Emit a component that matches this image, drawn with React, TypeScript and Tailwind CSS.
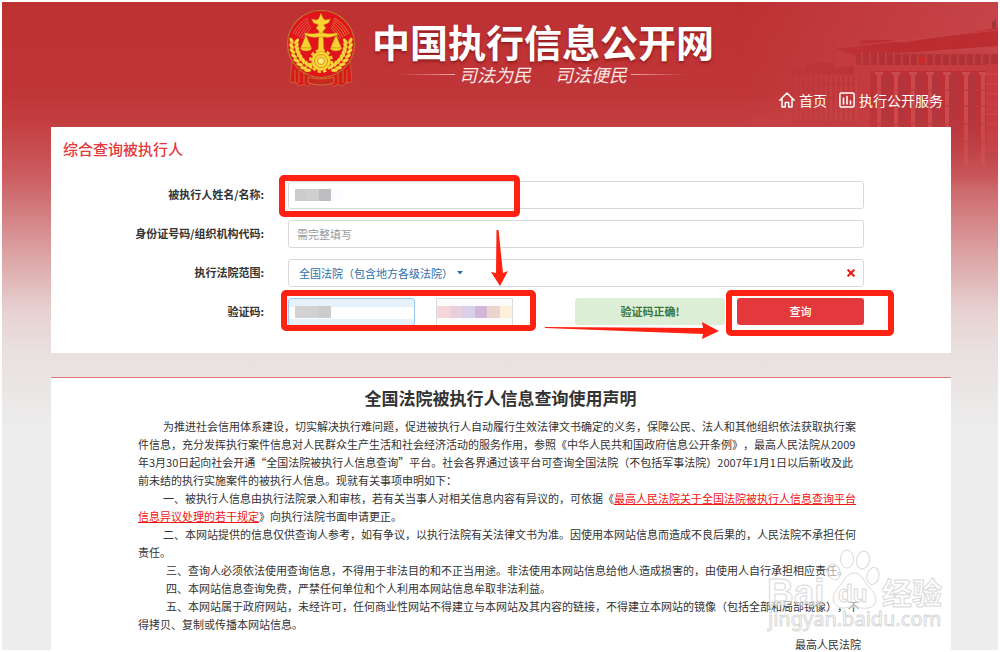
import React from "react";

const RED = "#ff2111";

function WheatBranch() {
  const angles = [186, 176, 166, 156, 146, 136, 126, 117];
  return (
    <g fill="#fbd93c" stroke="#cf8a1e" strokeWidth="0.35">
      {angles.map((deg) => {
        const a = (deg * Math.PI) / 180;
        const ox = 35 + 29.5 * Math.cos(a);
        const oy = 34 + 29.5 * Math.sin(a);
        const ix = 35 + 24.5 * Math.cos(a);
        const iy = 34 + 24.5 * Math.sin(a);
        return (
          <g key={deg}>
            <ellipse cx={ox} cy={oy} rx="1.7" ry="3.4" transform={`rotate(${deg - 208} ${ox} ${oy})`} />
            <ellipse cx={ix} cy={iy} rx="1.7" ry="3.4" transform={`rotate(${deg - 152} ${ix} ${iy})`} />
          </g>
        );
      })}
    </g>
  );
}

function Emblem() {
  const rays = [0, 1, 2, 3, 4, 5];
  const folds = [9, 13, 18, 27, 31, 35, 39, 43, 52, 57, 61];
  return (
    <svg viewBox="0 0 70 78" className="h-[78px] w-[70px] shrink-0" aria-hidden="true">
      <path d="M6 50 4 72l7 1 2 3 6-2 3 3 4-5h18l4 5 3-3 6 2 2-3 7-1-2-22Z" fill="#d91a1c" stroke="#c9703a" strokeWidth="0.7" />
      {folds.map((x) => (
        <path key={x} d={`M${x} 60v13`} stroke="#b9802f" strokeWidth="0.8" />
      ))}
      <path d="M22 67q13 4 26 0v6q-13 4-26 0Z" fill="#c9281f" stroke="#c98a3c" strokeWidth="0.7" />
      <circle cx="35" cy="34" r="33.5" fill="#e2141b" stroke="#b8762f" strokeWidth="1.2" />
      {rays.map((i) => (
        <g key={i} fill="none" strokeWidth="0.8">
          <path d={`M${7 + i * 2} ${24 + i}Q${12 + i * 2} ${13 + i * 1.6} ${22 + i * 0.6} ${8 + i * 1.9}`} stroke="#d9705a" />
          <path d={`M${63 - i * 2} ${24 + i}Q${58 - i * 2} ${13 + i * 1.6} ${48 - i * 0.6} ${8 + i * 1.9}`} stroke="#e09040" />
        </g>
      ))}
      <WheatBranch />
      <g transform="translate(70 0) scale(-1 1)">
        <WheatBranch />
      </g>
      <g fill="#f9d22f" stroke="#b9771a" strokeWidth="0.4">
        <path d="m35 3 2 5 2 2 5.500-1-2 4-5 2 2.500 3-3 3 1 22h-6l1-22-3-3 2.500-3-5-2-2-4 5.500 1 2-2Z" />
        <path d="M19 23q8 1.500 13 0h6q5 1.500 13 0l.5 2Q43 28.500 38 27h-6q-5 1.500-13.500-2Z" />
        <path d="m20 25-5.500 13h11Z" />
        <path d="m50 25-5.500 13h11Z" />
        <path d="M14 38h12q-1 3-6 3t-6-3ZM44 38h12q-1 3-6 3t-6-3Z" />
      </g>
      <circle cx="35" cy="51" r="10.500" fill="none" stroke="#f9d22f" strokeWidth="3" strokeDasharray="3.300 2.200" />
      <circle cx="35" cy="51" r="9.500" fill="#fbd735" stroke="#d99b22" strokeWidth="0.6" />
      <circle cx="35" cy="51" r="6.500" fill="none" stroke="#cf8a1e" strokeWidth="0.9" />
      <circle cx="35" cy="51" r="3.500" fill="#fde97a" stroke="#cf8a1e" strokeWidth="0.9" />
    </svg>
  );
}

function Courthouse() {
  const tall = [139, 156, 173, 190, 207, 226, 243];
  const low = Array.from({ length: 13 }, (_, i) => 58 + i * 5);
  return (
    <svg viewBox="0 0 260 186" className="absolute top-0 right-0 h-[186px] w-[260px]" aria-hidden="true">
      <defs>
        <linearGradient id="sky" x1="0" x2="1" y1="0" y2="0">
          <stop offset="0" stopColor="#d0606a" stopOpacity="0" />
          <stop offset="1" stopColor="#cf5a62" stopOpacity="0.45" />
        </linearGradient>
        <linearGradient id="fadeX" x1="0" x2="1" y1="0" y2="0">
          <stop offset="0.1" stopColor="#fff" stopOpacity="0" />
          <stop offset="0.6" stopColor="#fff" stopOpacity="0.85" />
        </linearGradient>
        <linearGradient id="fadeY" x1="0" x2="0" y1="0" y2="1">
          <stop offset="0.6" stopColor="#fff" />
          <stop offset="1" stopColor="#fff" stopOpacity="0" />
        </linearGradient>
        <mask id="maskX">
          <rect width="260" height="186" fill="url(#fadeX)" />
        </mask>
        <mask id="maskY">
          <rect width="260" height="186" fill="url(#fadeY)" />
        </mask>
      </defs>
      <g mask="url(#maskY)">
        <rect width="260" height="186" fill="url(#sky)" />
        <g mask="url(#maskX)">
          <path d="M118 62h142v124H118Z" fill="#b8282c" opacity="0.75" />
          <path d="M54 72h64v52H54Z" fill="#b8302f" opacity="0.6" />
          <path d="M258 2v25l-4-1V20l4-3Z" fill="#9c3338" />
          <path d="m96 46 26-4V38h32l8 3 98-15v18L118 54Z" fill="#ba2a2e" />
          <path d="m96 46 164-18" stroke="#c8464b" strokeWidth="1" />
          <path d="m44 68 24-2v-5h28v5l20-2v8H56Z" fill="#b92c30" />
          <path d="M118 52h142v12H118Z" fill="#a82a2f" opacity="0.8" />
          {Array.from({ length: 17 }, (_, i) => (
            <path key={i} d={`M${124 + i * 8} 50v14`} stroke="#bd3f43" strokeWidth="2" />
          ))}
          <path d="M116 63h144v6H116Z" fill="#c63c40" />
          <path d="M118 64h14v62h-14Z" fill="#c53a3e" />
          {low.map((x) => (
            <path key={x} d={`M${x} 73v46`} stroke="#c64a4e" strokeWidth="1.500" />
          ))}
          <path d="M56 82h60M56 96h60" stroke="#b03036" strokeWidth="1" />
          {tall.map((x) => (
            <g key={x}>
              <path d={`M${x + 6} 72v90h6V72Z`} fill="#9b3a48" opacity="0.45" />
              <path d={`M${x - 2} 70h8v3h-2v90h-4V73h-2Z`} fill="#cb4c50" />
            </g>
          ))}
          <path d="M138 88h112M138 104h112M138 122h112M138 140h112" stroke="#b8363b" strokeWidth="1" />
          <path d="M248 62h12v88h-12Z" fill="#c63a3e" />
          <path d="M248 72h12M248 82h12M248 92h12M248 102h12M248 112h12M248 122h12M248 132h12" stroke="#d05a5d" strokeWidth="0.5" />
          <circle cx="184" cy="58" r="3.500" fill="#cf2424" />
        </g>
      </g>
    </svg>
  );
}

function HomeIcon() {
  return (
    <svg viewBox="0 0 16 16" className="size-4" fill="none" stroke="currentColor" strokeWidth="1.500" strokeLinejoin="round" strokeLinecap="round" aria-hidden="true">
      <path d="M.8 8.200 8 1l7.200 7.200M3 7v8h3.300v-4.500h3.400V15H13V7" />
    </svg>
  );
}

function ChartIcon() {
  return (
    <svg viewBox="0 0 16 16" className="size-4" fill="none" stroke="currentColor" strokeWidth="1.500" strokeLinecap="round" aria-hidden="true">
      <rect x="0.900" y="0.900" width="14.200" height="14.200" rx="1.500" />
      <path d="M4.500 6v6M8 4.500V12M11.500 9v3" />
    </svg>
  );
}

function Mosaic({ colors }: { colors: string[] }) {
  return (
    <span className="pointer-events-none absolute top-2 left-[7px] flex" aria-hidden="true">
      {colors.map((c, i) => (
        <span key={i} className="h-3 w-3" style={{ backgroundColor: c }} />
      ))}
    </span>
  );
}

function Annotations() {
  return (
    <svg viewBox="0 0 900 226" className="pointer-events-none absolute top-0 left-0 h-[226px] w-[900px]" aria-hidden="true">
      <g fill="none" stroke={RED} strokeWidth="6">
        <rect x="231" y="51" width="235" height="36" rx="2" />
        <rect x="233" y="166" width="249" height="35" rx="2" />
        <rect x="678" y="166" width="162" height="40" rx="2" />
      </g>
      <path d="M445.500 103h2L452 146l5-2-8 15-9-14 5 1Z" fill={RED} />
      <path d="m494 200 158 1-1-6 17 9-17 8 1-5-158-6Z" fill={RED} />
    </svg>
  );
}

function Watermark() {
  return (
    <svg viewBox="0 0 180 88" className="pointer-events-none absolute right-[51px] bottom-[14px] h-[88px] w-[180px]" aria-hidden="true">
      <g fill="#fff" fillOpacity="0.55" stroke="#d9d9d9" strokeWidth="1" strokeLinejoin="round">
        <ellipse cx="80" cy="11" rx="6.500" ry="9" />
        <ellipse cx="96" cy="12" rx="6.500" ry="9" transform="rotate(12 96 12)" />
        <ellipse cx="67" cy="24" rx="6" ry="8" transform="rotate(-22 67 24)" />
        <ellipse cx="106" cy="28" rx="6" ry="8.500" transform="rotate(14 106 28)" />
        <path d="M87 25c-8 0-10 9-16 15s-8 18 4 20c5 0 8-1 12-1s8 2 14 1c11-2 9-14 2-20S96 25 87 25Z" />
        <text x="0" y="57" fontFamily="'Liberation Sans', Arial, sans-serif" fontWeight="700" fontSize="37">Bai</text>
        <text x="71" y="54" fontFamily="'Liberation Sans', Arial, sans-serif" fontWeight="700" fontSize="24">du</text>
        <text x="115" y="56" fontFamily="'Noto Sans CJK SC', sans-serif" fontWeight="700" fontSize="30">经验</text>
        <text x="1" y="78" fontFamily="'Noto Sans', sans-serif" fontWeight="400" fontSize="20">jingyan.baidu.com</text>
      </g>
    </svg>
  );
}

const label = "w-[213px] shrink-0 text-right text-[11px] font-bold leading-[26px] text-[#333]";
const field = "block h-7 w-full rounded-[3px] border border-[#d9d9d9] bg-white px-2 text-[11px] text-[#555] outline-none placeholder:text-[#999]";
const row = "flex items-start gap-6";

export default function App() {
  return (
    <div className="relative min-h-screen border-2 border-white bg-[#ededed] bg-[linear-gradient(180deg,#be3133_0px,#c03537_90px,#c44043_125px,#cb5e61_175px,#d68b8d_225px,#dfb1b2_270px,#e7d2d2_310px,#e9e0e0_350px,#ededed_430px)] bg-no-repeat font-['Noto_Sans_CJK_SC','Noto_Sans',sans-serif] text-[#333]">
      <Courthouse />
      <div className="relative flex flex-col pr-[47px] pl-[49px]">
        <header className="flex h-[125px] flex-col">
          <div className="flex justify-center gap-3 pt-2 pl-[2px]">
            <Emblem />
            <div className="flex flex-col items-center pt-[9px]">
              <h1 className="px-1 text-[38px] leading-[44px] font-bold text-white [text-shadow:0_2px_3px_rgba(100,0,0,0.5)]">中国执行信息公开网</h1>
              <p className="flex items-center gap-1 text-[18px] leading-[22px] text-[#fbe9e9] italic">
                <span className="h-px w-14 bg-linear-to-r from-transparent to-[#eba9aa]" />
                <span>司法为民</span>
                <span className="ml-5">司法便民</span>
                <span className="h-px w-14 bg-linear-to-l from-transparent to-[#eba9aa]" />
              </p>
            </div>
          </div>
          <nav className="mt-[2px] flex justify-end gap-3 pr-2 text-sm leading-5 text-white">
            <a href="#home" className="flex items-center gap-1">
              <HomeIcon />
              首页
            </a>
            <a href="#service" className="flex items-center gap-1">
              <ChartIcon />
              执行公开服务
            </a>
          </nav>
        </header>

        <main>
          <section className="relative bg-white pt-3 pb-[27px]">
            <h2 className="pl-3 text-[15px] leading-5 font-medium text-[#e4393c]">综合查询被执行人</h2>
            <form className="mt-[22px] flex flex-col gap-[11px] pr-[87px]" onSubmit={(e) => e.preventDefault()}>
              <div className={row}>
                <label htmlFor="name" className={label}>被执行人姓名/名称:</label>
                <div className="relative flex-1">
                  <input id="name" className={field} />
                  <Mosaic colors={["#cdcccd", "#cfcfd1", "#bdbdbf", "#fafcff"]} />
                </div>
              </div>
              <div className={row}>
                <label htmlFor="code" className={label}>身份证号码/组织机构代码:</label>
                <div className="flex-1">
                  <input id="code" className={field} placeholder="需完整填写" />
                </div>
              </div>
              <div className={row}>
                <span id="scope" className={label}>执行法院范围:</span>
                <div className="flex h-7 flex-1 items-center justify-between rounded-[3px] border border-[#d9d9d9] bg-white pr-2 pl-[10px]">
                  <button type="button" aria-labelledby="scope scope-value" className="flex items-center gap-1 text-[11px] text-[#2f6fae]">
                    <span id="scope-value">全国法院（包含地方各级法院）</span>
                    <svg viewBox="0 0 6 4" className="h-1 w-[6px]" aria-hidden="true">
                      <path d="M0 0h6L3 3.500Z" fill="#2f6fae" />
                    </svg>
                  </button>
                  <button type="button" aria-label="清除" className="text-[#f01414]">
                    <svg viewBox="0 0 8 8" className="size-2" fill="none" stroke="currentColor" strokeWidth="2" aria-hidden="true">
                      <path d="m.6.6 6.800 6.800M7.400.6.6 7.400" />
                    </svg>
                  </button>
                </div>
              </div>
              <div className={row}>
                <label htmlFor="captcha" className={label}>验证码:</label>
                <div className="flex flex-1 items-start">
                  <div className="relative w-[127px]">
                    <input id="captcha" className="block h-7 w-full rounded-[3px] border border-[#9ccbf0] bg-[linear-gradient(180deg,#e6f2fb_0_8px,#fff_8px_20px,#e6f2fb_20px)] px-2 text-[11px] outline-none" />
                    <Mosaic colors={["#d3d2d2", "#d1d1d1", "#cccccd"]} />
                  </div>
                  <div className="ml-[21px] flex h-7 w-[77px] items-center border border-[#dcdcdc] bg-[#fbfafa]" role="img" aria-label="验证码图片">
                    {["#f5d5d8", "#e8cfdc", "#d7d0e8", "#d3b5d8", "#ecd3cd", "#fdf0d8"].map((c) => (
                      <span key={c} className="h-3 flex-1" style={{ backgroundColor: c }} />
                    ))}
                  </div>
                  <p className="ml-[62px] h-[27px] flex-1 rounded-[3px] bg-[#dcefd6] text-center text-[11px] leading-[27px] font-bold text-[#3c763d]">验证码正确!</p>
                  <button type="submit" className="ml-3 h-[27px] w-[127px] rounded-[3px] bg-[#e4393c] text-[11px] font-medium text-white">查询</button>
                </div>
              </div>
            </form>
            <Annotations />
          </section>

          <section className="mt-6 border-t border-[#e2777a] bg-white pt-[7px] pr-[88px] pl-[87px] [text-spacing-trim:space-all]">
            <h2 className="text-center text-[17px] leading-[26px] font-bold">全国法院被执行人信息查询使用声明</h2>
            <div className="mt-[6px] text-[11px] leading-[18px] text-[#333]">
              <p className="indent-[25px]">为推进社会信用体系建设，切实解决执行难问题，促进被执行人自动履行生效法律文书确定的义务，保障公民、法人和其他组织依法获取执行案件信息，充分发挥执行案件信息对人民群众生产生活和社会经济活动的服务作用，参照《中华人民共和国政府信息公开条例》，最高人民法院从2009年3月30日起向社会开通“全国法院被执行人信息查询”平台。社会各界通过该平台可查询全国法院（不包括军事法院）2007年1月1日以后新收及此前未结的执行实施案件的被执行人信息。现就有关事项申明如下：</p>
              <p className="indent-[25px]">一、被执行人信息由执行法院录入和审核，若有关当事人对相关信息内容有异议的，可依据《<a href="#rules" className="text-[#f01414] underline">最高人民法院关于全国法院被执行人信息查询平台信息异议处理的若干规定</a>》向执行法院书面申请更正。</p>
              <p className="indent-[25px]">二、本网站提供的信息仅供查询人参考，如有争议，以执行法院有关法律文书为准。因使用本网站信息而造成不良后果的，人民法院不承担任何责任。</p>
              <p className="indent-[28px]">三、查询人必须依法使用查询信息，不得用于非法目的和不正当用途。非法使用本网站信息给他人造成损害的，由使用人自行承担相应责任。</p>
              <p className="indent-[28px]">四、本网站信息查询免费，严禁任何单位和个人利用本网站信息牟取非法利益。</p>
              <p className="indent-[28px]">五、本网站属于政府网站，未经许可，任何商业性网站不得建立与本网站及其内容的链接，不得建立本网站的镜像（包括全部和局部镜像），不得拷贝、复制或传播本网站信息。</p>
              <p className="mt-[6px] pr-[2px] text-right leading-[11px]">最高人民法院</p>
            </div>
          </section>
        </main>
      </div>
      <Watermark />
    </div>
  );
}
